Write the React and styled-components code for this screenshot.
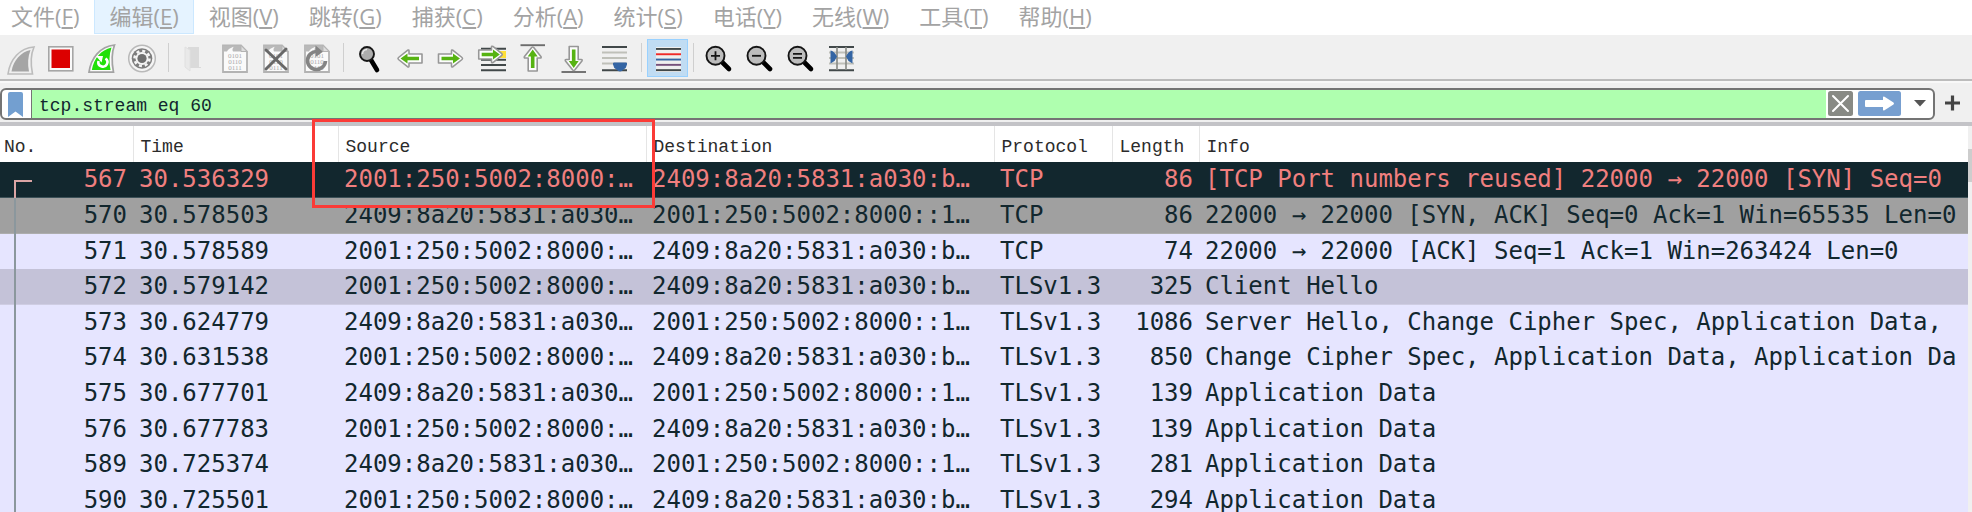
import React, { useState } from "react";
import styled, { createGlobalStyle } from "styled-components";

const GlobalStyle = createGlobalStyle`
  * {
    box-sizing: border-box;
  }

  body {
    margin: 0;
    background-color: white;
  }
`;

const Container = styled.div`
  position: relative;
  height: 100vh;
  display: flex;
  flex-direction: column;
  overflow: hidden;
  font-family: "Liberation Mono", "Noto Sans CJK SC", monospace;
`;

const MenuBar = styled.nav`
  display: flex;
  height: 35px;
  margin-left: -4px;
  background-color: white;
`;

const MenuItem = styled.button`
  height: 34px;
  padding: 0 14px 2px;
  border: 1px solid ${(props) => (props.$active ? "#cce8ff" : "transparent")};
  border-top: none;
  background-color: ${(props) => (props.$active ? "#e5f3ff" : "transparent")};
  color: #a3a3a3;
  font-family: "Open Sans", "Noto Sans CJK SC", sans-serif;
  font-size: 22px;
  line-height: 26px;
  white-space: nowrap;
`;

const Toolbar = styled.div`
  display: flex;
  height: 46px;
  padding-top: 4px;
  margin-left: -1px;
  background-color: #f0f0f0;
  border-bottom: 2px solid #bcbcbc;
`;

const ToolButton = styled.button`
  width: 41px;
  height: 38px;
  padding: ${(props) => (props.$checked ? "1px 3px" : "2px 4px")};
  border: ${(props) => (props.$checked ? "1px solid #99d1ff" : "none")};
  background-color: ${(props) => (props.$checked ? "#c0dcf3" : "transparent")};

  svg {
    display: block;
  }
`;

const Separator = styled.span`
  width: 1px;
  height: 29px;
  margin: 4px 5px;
  background-color: #cfcfcf;
`;

const FilterBar = styled.form`
  display: flex;
  align-items: center;
  height: 41px;
  padding-right: 11px;
  gap: 8px;
  background-color: #f0f0f0;
  border-top: 2px solid #f8f8f8;
`;

const FilterBox = styled.div`
  flex: 1;
  display: flex;
  align-items: center;
  height: 32px;
  margin-top: 2px;
  overflow: hidden;
  background-color: white;
  border: 2px solid #747474;
  border-radius: 6px;
`;

const PlainButton = styled.button`
  display: flex;
  padding: 0;
  border: none;
  background: none;
`;

const BookmarkButton = styled(PlainButton)`
  width: 30px;
  height: 28px;
  padding: 2px 0 0 6px;
  border-right: 1px solid #747474;
`;

const FilterInput = styled.input`
  flex: 1;
  height: 28px;
  min-width: 0;
  padding: 4px 7px 0;
  border: none;
  outline: none;
  background-color: #afffaf;
  color: #12272e;
  font-family: "Liberation Mono", monospace;
  font-size: 18px;
`;

const FilterActions = styled.div`
  display: flex;
  align-items: center;
  gap: 5px;
  padding: 0 1px 0 2px;
`;

const ListSplit = styled.div`
  height: 4px;
  background-color: #c3c3c7;
`;

const PacketArea = styled.main`
  flex: 1;
  display: flex;
  min-height: 0;
  overflow: hidden;
`;

const PacketTable = styled.table`
  flex: 1;
  min-width: 0;
  height: 0;
  table-layout: fixed;
  border-collapse: collapse;
`;

const Column = styled.col`
  width: ${(props) => props.$width};
`;

const HeadCell = styled.th`
  height: 36px;
  padding: 6px 0 0 ${(props) => (props.$first ? "4px" : "7px")};
  border-right: 1px solid #e5e5e5;
  background-color: white;
  color: #2b2b2b;
  font-size: 18px;
  font-weight: 400;
  text-align: left;

  &:last-child {
    border-right: none;
  }
`;

const rowColors = {
  bad: { bg: "#12272e", fg: "#f07f7f", line: "#3c5158" },
  syn: { bg: "#a0a0a0", fg: "#12272e", line: "#adadad" },
  tls: { bg: "#e6e5ff", fg: "#12272e", line: "#e6e5ff" },
  current: { bg: "#c4c2d8", fg: "#12272e", line: "#cfcde3" },
};

const Row = styled.tr`
  height: 36px;
  background-color: ${(props) => rowColors[props.$kind].bg};
  color: ${(props) => rowColors[props.$kind].fg};
  box-shadow: inset 0 -1px ${(props) => rowColors[props.$kind].line};

  &:nth-child(5n),
  &:nth-child(5n + 3) {
    height: 35px;
  }
`;

const Cell = styled.td`
  position: relative;
  padding: 0 6px 2px;
  overflow: hidden;
  font-family: "DejaVu Sans Mono", monospace;
  font-size: 24px;
  line-height: 24px;
  text-align: ${(props) => (props.$right ? "right" : "left")};
  white-space: nowrap;
`;

/* line that ties the packets of one conversation together */
const NumberCell = styled(Cell)`
  &::before {
    content: "";
    position: absolute;
    left: 14px;
    top: ${(props) => (props.$start ? "18px" : "0")};
    bottom: 0;
    width: 16px;
    border-left: 2px solid ${(props) => (props.$start ? "#dba5a5" : "#8b979d")};
    border-top: ${(props) => (props.$start ? "2px solid #dba5a5" : "none")};
  }
`;

const ScrollTrack = styled.div`
  width: 4px;
  padding-top: 23px;
  background-color: #f0f0f0;
`;

const ScrollThumb = styled.div`
  height: 33px;
  background-color: #cdcdcd;
`;

const Highlight = styled.div`
  position: absolute;
  left: 312px;
  top: 119px;
  width: 343px;
  height: 89px;
  border: 3px solid #fb3b37;
  pointer-events: none;
`;

const Icon = ({ children }) => (
  <svg width="33" height="34" viewBox="0 0 33 34" fill="none" aria-hidden="true">
    {children}
  </svg>
);

const Fin = ({ color, rim }) => (
  <>
    <path d="M31 6C17 7 7 18 5 33H29.500C27.500 23 27.500 14 31 6Z" fill="#efefef" stroke={rim} strokeWidth="1.600" />
    <path d="M27.500 9C18 11 10.500 19 8.500 30.500H26C24.500 23 24.800 16 27.500 9Z" fill={color} />
  </>
);

const StartIcon = () => (
  <Icon>
    <Fin color="#a5a5a5" rim="#bcbcbc" />
  </Icon>
);

const StopIcon = () => (
  <Icon>
    <rect x="4.800" y="5.800" width="24" height="24" fill="#fafafa" stroke="#a6a6a6" strokeWidth="1.600" />
    <rect x="7.500" y="8.500" width="18.500" height="18.500" fill="#dc0000" />
  </Icon>
);

const RestartIcon = () => (
  <Icon>
    <path d="M29.500 4C15 5.500 6 17 4 31.200H28.500C26.500 21 26.500 12 29.500 4Z" fill="#fafafa" stroke="#a3a3a3" strokeWidth="1.700" />
    <path d="M26.500 6.500C16 9 9 17 6.800 29H25.500C24 21 24 14 26.500 6.500Z" fill="#20e008" />
    <path d="M20.500 17.500A4.500 4.500 0 1 1 13.500 20" stroke="white" strokeWidth="2.600" />
    <path d="M11 15L18 15L16.500 21.500Z" fill="white" />
  </Icon>
);

const OptionsIcon = () => (
  <Icon>
    <circle cx="16" cy="17.500" r="13.300" fill="#f5f5f5" stroke="#b9b9b9" strokeWidth="1.500" />
    <circle cx="16" cy="17.500" r="10.300" fill="#7d7d7d" />
    <circle cx="16" cy="17.500" r="6.500" fill="#f5f5f5" />
    <circle cx="16" cy="17.500" r="7.500" stroke="#f5f5f5" strokeWidth="2.600" strokeDasharray="3 2.890" />
    <circle cx="16" cy="17.500" r="4.600" fill="#707070" />
  </Icon>
);

const OpenIcon = () => (
  <Icon>
    <path d="M10 6H21V26H23V27H10Z" fill="#dadada" />
    <path d="M7 6L12 9V30L7 26Z" fill="#e9e9e9" stroke="#e0e0e0" />
  </Icon>
);

const FileShape = () => (
  <>
    <path d="M4 4.500H22L28 10.500V31H4Z" fill="#fafafa" stroke="#b3b3b3" strokeWidth="1.800" />
    <path d="M4 4.500H22L28 10.500H14C13 9 13.500 7 15 5.500C11 7 9 8.500 8 10.500H4Z" fill="#b9b9b9" />
    <path d="M22 4.500V10.500H28Z" fill="#dedede" stroke="#b3b3b3" />
    <g fill="#a9a9a9" fontFamily="Liberation Serif, serif" fontSize="7" textAnchor="middle">
      <text x="16" y="17">0101</text>
      <text x="16" y="23">0110</text>
      <text x="16" y="29">0111</text>
    </g>
  </>
);

const SaveIcon = () => (
  <Icon>
    <FileShape />
  </Icon>
);

const CloseIcon = () => (
  <Icon>
    <FileShape />
    <path d="M6 9L26 28M26 8L6 28" stroke="#686868" strokeWidth="3" strokeLinecap="round" />
  </Icon>
);

const ReloadIcon = () => (
  <Icon>
    <FileShape />
    <path d="M24.500 20A9 9 0 1 1 16 10.500" stroke="#848484" strokeWidth="3.600" />
    <path d="M14.500 4.500L22 10.800L14.500 16Z" fill="#848484" />
  </Icon>
);

const FindIcon = () => (
  <Icon>
    <path d="M18 19L24 29" stroke="black" strokeWidth="4.600" strokeLinecap="round" />
    <circle cx="14" cy="13" r="7" fill="#adadad" stroke="#161616" strokeWidth="1.900" />
    <path d="M9.500 13C9.500 10.500 11.500 8.500 14 8.500" stroke="#e8e8e8" strokeWidth="1.500" />
  </Icon>
);

/* white arrow with a gray rim and a green core, drawn pointing right */
const Arrow = ({ transform }) => (
  <g transform={transform}>
    <path
      d="M-12 -4.500H1V-7.500Q1 -9 2.500 -8.200L11.500 -1Q12.500 0 11.500 1L2.500 8.200Q1 9 1 7.500V4.500H-12Z"
      fill="#fdfdfd"
      stroke="#979797"
      strokeWidth="1.600"
      strokeLinejoin="round"
    />
    <path d="M-9 -1.800H2.500V-5L9.500 0L2.500 5V1.800H-9Z" fill="#56b312" />
  </g>
);

const BackIcon = () => (
  <Icon>
    <Arrow transform="translate(16 17.500) rotate(180)" />
  </Icon>
);

const ForwardIcon = () => (
  <Icon>
    <Arrow transform="translate(15.500 17.500)" />
  </Icon>
);

const GoToIcon = () => (
  <Icon>
    <rect x="23" y="10" width="7" height="7" fill="#ffdf38" />
    <path d="M5 7.800H30M5 24H30M5 29.200H30" stroke="#414849" strokeWidth="1.900" />
    <path d="M5 18.800H30" stroke="#414849" strokeWidth="1.900" />
    <Arrow transform="translate(14.500 13.500) scale(0.980)" />
  </Icon>
);

const FirstIcon = () => (
  <Icon>
    <path d="M3.500 4.200H28" stroke="#6d6d6d" strokeWidth="1.900" />
    <Arrow transform="translate(15.700 18) rotate(-90)" />
  </Icon>
);

const LastIcon = () => (
  <Icon>
    <path d="M3.500 31H28" stroke="#6d6d6d" strokeWidth="1.900" />
    <Arrow transform="translate(15.700 17.500) rotate(90)" />
  </Icon>
);

const AutoScrollIcon = () => (
  <Icon>
    <path d="M3 6H28M3 29.200H28" stroke="#414849" strokeWidth="1.900" />
    <path d="M3 11.500H28M3 17H28M3 22.500H28" stroke="#bfc0b9" strokeWidth="1.800" />
    <path d="M15 21.500H27Q28.500 21.500 28 23.500Q27.500 27 24.500 28.500Q23 30.500 21 30.500Q19 30.500 17.500 28.500Q14.500 27 14 23.500Q13.500 21.500 15 21.500Z" fill="#3465a4" />
  </Icon>
);

const lineColors = ["#414849", "#ef2929", "#3465a4", "#75507b", "#414849"];

const ColorizeIcon = () => (
  <Icon>
    <rect x="5" y="6" width="25" height="25" fill="#efefef" />
    {lineColors.map((color, i) => (
      <rect key={i} x="5" y={7 + i * 5.3} width="25" height="1.900" fill={color} />
    ))}
  </Icon>
);

const Magnifier = ({ sign }) => (
  <Icon>
    <path d="M19.500 21.500L26 28" stroke="black" strokeWidth="4.600" strokeLinecap="round" />
    <circle cx="12.500" cy="14.800" r="9" fill="#bdbdbd" stroke="#141414" strokeWidth="1.900" />
    <path d={sign} stroke="#141414" strokeWidth="1.800" />
  </Icon>
);

const ZoomInIcon = () => <Magnifier sign="M8 14.800H17M12.500 10.300V19.300" />;
const ZoomOutIcon = () => <Magnifier sign="M8 14.800H17" />;
const ZoomResetIcon = () => <Magnifier sign="M8 12.800H17M8 16.800H17" />;

const ResizeIcon = () => (
  <Icon>
    <path d="M3 11.500H28M3 17H28M3 22.500H28" stroke="#bfc0b9" strokeWidth="1.800" />
    <path d="M3 6H28M3 29.200H28" stroke="#414849" strokeWidth="1.900" />
    <path d="M11 6V29M20 6V29" stroke="#8b8d89" strokeWidth="1.700" />
    <path d="M4.500 9.500Q8 10 11 15.500L8.500 20L4.500 22.500ZM26.500 9.500Q22.500 10 20 15.500L22.500 20L26.500 22.500Z" fill="#3465a4" />
  </Icon>
);

const tools = [
  [
    ["Start capture", StartIcon],
    ["Stop capture", StopIcon],
    ["Restart capture", RestartIcon],
    ["Capture options", OptionsIcon],
  ],
  [
    ["Open file", OpenIcon],
    ["Save file", SaveIcon],
    ["Close file", CloseIcon],
    ["Reload file", ReloadIcon],
  ],
  [
    ["Find packet", FindIcon],
    ["Previous packet", BackIcon],
    ["Next packet", ForwardIcon],
    ["Go to packet", GoToIcon],
    ["First packet", FirstIcon],
    ["Last packet", LastIcon],
    ["Auto scroll", AutoScrollIcon],
  ],
  [["Colorize packets", ColorizeIcon]],
  [
    ["Zoom in", ZoomInIcon],
    ["Zoom out", ZoomOutIcon],
    ["Normal size", ZoomResetIcon],
    ["Resize columns", ResizeIcon],
  ],
];

const menus = [
  ["文件", "F"],
  ["编辑", "E"],
  ["视图", "V"],
  ["跳转", "G"],
  ["捕获", "C"],
  ["分析", "A"],
  ["统计", "S"],
  ["电话", "Y"],
  ["无线", "W"],
  ["工具", "T"],
  ["帮助", "H"],
];

const columns = [
  ["No.", "133px"],
  ["Time", "205px"],
  ["Source", "308px"],
  ["Destination", "348px"],
  ["Protocol", "118px"],
  ["Length", "87px"],
  ["Info", "auto"],
];

const local = ["2001:250:5002:8000:…", "2409:8a20:5831:a030:b…"];
const remote = ["2409:8a20:5831:a030…", "2001:250:5002:8000::1…"];

const packets = [
  [567, "30.536329", local, "TCP", 86, "[TCP Port numbers reused] 22000 → 22000 [SYN] Seq=0", "bad"],
  [570, "30.578503", remote, "TCP", 86, "22000 → 22000 [SYN, ACK] Seq=0 Ack=1 Win=65535 Len=0", "syn"],
  [571, "30.578589", local, "TCP", 74, "22000 → 22000 [ACK] Seq=1 Ack=1 Win=263424 Len=0", "tls"],
  [572, "30.579142", local, "TLSv1.3", 325, "Client Hello", "current"],
  [573, "30.624779", remote, "TLSv1.3", 1086, "Server Hello, Change Cipher Spec, Application Data,", "tls"],
  [574, "30.631538", local, "TLSv1.3", 850, "Change Cipher Spec, Application Data, Application Da", "tls"],
  [575, "30.677701", remote, "TLSv1.3", 139, "Application Data", "tls"],
  [576, "30.677783", local, "TLSv1.3", 139, "Application Data", "tls"],
  [589, "30.725374", remote, "TLSv1.3", 281, "Application Data", "tls"],
  [590, "30.725501", local, "TLSv1.3", 294, "Application Data", "tls"],
];

const App = () => {
  const [filter, setFilter] = useState("tcp.stream eq 60");
  const [colorize, setColorize] = useState(true);

  return (
    <Container>
      <GlobalStyle />
      <MenuBar>
        {menus.map(([label, key]) => (
          <MenuItem key={key} $active={key === "E"}>
            {label}(<u>{key}</u>)
          </MenuItem>
        ))}
      </MenuBar>

      <Toolbar>
        {tools.map((group, i) => (
          <React.Fragment key={i}>
            {i > 0 && <Separator />}
            {group.map(([label, ToolIcon]) => {
              const toggle = label === "Colorize packets";
              return (
                <ToolButton
                  key={label}
                  aria-label={label}
                  $checked={toggle && colorize}
                  onClick={toggle ? () => setColorize(!colorize) : undefined}
                >
                  <ToolIcon />
                </ToolButton>
              );
            })}
          </React.Fragment>
        ))}
      </Toolbar>

      <FilterBar onSubmit={(e) => e.preventDefault()}>
        <FilterBox>
          <BookmarkButton type="button" aria-label="Saved filters">
            <svg width="15" height="25" viewBox="0 0 15 25">
              <path d="M0 2Q0 0 2 0H13Q15 0 15 2V25L7.500 19.500L0 25Z" fill="#739fd0" />
            </svg>
          </BookmarkButton>
          <FilterInput
            aria-label="Display filter"
            spellCheck="false"
            value={filter}
            onChange={(e) => setFilter(e.target.value)}
          />
          <FilterActions>
            <PlainButton type="button" aria-label="Clear" onClick={() => setFilter("")}>
              <svg width="25" height="25" viewBox="0 0 25 25">
                <rect width="25" height="25" rx="2.500" fill="#888a85" />
                <path d="M5 5L20 20M20 5L5 20" stroke="white" strokeWidth="2" strokeLinecap="round" />
              </svg>
            </PlainButton>
            <PlainButton type="submit" aria-label="Apply">
              <svg width="43" height="25" viewBox="0 0 43 25">
                <rect width="43" height="25" rx="2.500" fill="#779fd0" />
                <path d="M8 9H25V6.500Q25 5 26.500 5.800L35.500 11.500Q36.500 12.500 35.500 13.500L26.500 19.200Q25 20 25 18.500V16H8Q7 16 7 15V10Q7 9 8 9Z" fill="white" />
              </svg>
            </PlainButton>
            <PlainButton type="button" aria-label="Recent filters">
              <svg width="26" height="25" viewBox="0 0 26 25">
                <path d="M8 9H20L14 15.500Z" fill="#555" />
              </svg>
            </PlainButton>
          </FilterActions>
        </FilterBox>
        <PlainButton type="button" aria-label="Add filter button">
          <svg width="18" height="18" viewBox="0 0 18 18">
            <path d="M2 9H17M9.500 1.500V16.500" stroke="#444" strokeWidth="3.200" />
          </svg>
        </PlainButton>
      </FilterBar>
      <ListSplit />

      <PacketArea>
        <PacketTable>
          <colgroup>
            {columns.map(([name, width]) => (
              <Column key={name} $width={width} />
            ))}
          </colgroup>
          <thead>
            <tr>
              {columns.map(([name], i) => (
                <HeadCell key={name} $first={i === 0}>
                  {name}
                </HeadCell>
              ))}
            </tr>
          </thead>
          <tbody>
            {packets.map(([no, time, [source, destination], protocol, length, info, kind], i) => (
              <Row key={no} $kind={kind}>
                <NumberCell $right $start={i === 0}>
                  {no}
                </NumberCell>
                <Cell>{time}</Cell>
                <Cell>{source}</Cell>
                <Cell>{destination}</Cell>
                <Cell>{protocol}</Cell>
                <Cell $right>{length}</Cell>
                <Cell>{info}</Cell>
              </Row>
            ))}
          </tbody>
        </PacketTable>
        <ScrollTrack>
          <ScrollThumb />
        </ScrollTrack>
      </PacketArea>
      <Highlight />
    </Container>
  );
};

export default App;
